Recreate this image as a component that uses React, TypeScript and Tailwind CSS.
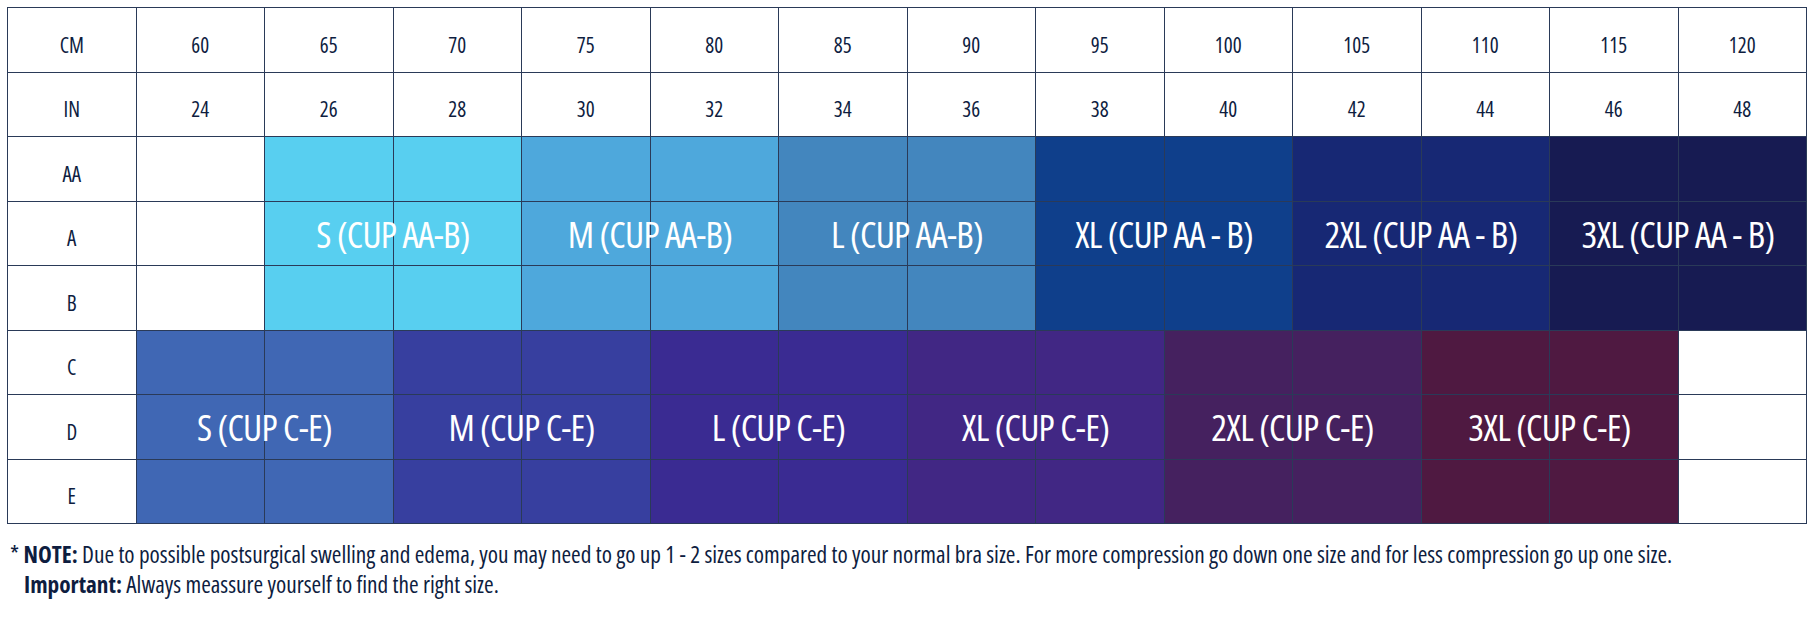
import React from 'react';

const cm = [60, 65, 70, 75, 80, 85, 90, 95, 100, 105, 110, 115, 120];
const inch = [24, 26, 28, 30, 32, 34, 36, 38, 40, 42, 44, 46, 48];

// colour per size block, by column index (1..13)
const topColors = ['', 'bg-[#58cff0]', 'bg-[#58cff0]', 'bg-[#4ea8dc]', 'bg-[#4ea8dc]', 'bg-[#4386be]', 'bg-[#4386be]', 'bg-[#0f3f8b]', 'bg-[#0f3f8b]', 'bg-[#172874]', 'bg-[#172874]', 'bg-[#171b52]', 'bg-[#171b52]'];
const bottomColors = ['bg-[#4067b4]', 'bg-[#4067b4]', 'bg-[#373f9f]', 'bg-[#373f9f]', 'bg-[#3a2b92]', 'bg-[#3a2b92]', 'bg-[#412784]', 'bg-[#412784]', 'bg-[#45215f]', 'bg-[#45215f]', 'bg-[#4f1941]', 'bg-[#4f1941]', ''];

const Cell: React.FC<{ children?: React.ReactNode; bg?: string }> = ({ children, bg }) => (
  <div className={`flex items-center justify-center pt-[11px] text-[21px] text-[#0e1d3f] ${bg || 'bg-white'}`}>{children}</div>
);

const Label: React.FC<{ children: React.ReactNode; className: string }> = ({ children, className }) => (
  <div className={`flex items-center justify-center whitespace-nowrap text-white text-[37px] tracking-[-0.02em] ${className}`}>{children}</div>
);

export default function App() {
  return (
    <div className="bg-white w-[1816px] h-[618px] p-[7px] font-['Open_Sans',sans-serif] [font-stretch:75%]">
      <div className="grid w-[1800px]">
        <div className="col-start-1 row-start-1 grid grid-cols-[repeat(14,minmax(0,1fr))] grid-rows-[repeat(8,63.5px)] gap-px bg-[#2a3a58] border border-[#2a3a58]">
          <Cell>CM</Cell>
          {cm.map((v) => <Cell key={'c' + v}>{v}</Cell>)}
          <Cell>IN</Cell>
          {inch.map((v) => <Cell key={'i' + v}>{v}</Cell>)}
          {['AA', 'A', 'B'].map((r) => (
            <React.Fragment key={r}>
              <Cell>{r}</Cell>
              {topColors.map((c, i) => <Cell key={r + i} bg={c || undefined} />)}
            </React.Fragment>
          ))}
          {['C', 'D', 'E'].map((r) => (
            <React.Fragment key={r}>
              <Cell>{r}</Cell>
              {bottomColors.map((c, i) => <Cell key={r + i} bg={c || undefined} />)}
            </React.Fragment>
          ))}
        </div>

        {/* size labels, same grid laid over the cells */}
        <div className="col-start-1 row-start-1 grid grid-cols-[repeat(14,minmax(0,1fr))] grid-rows-[repeat(8,63.5px)] gap-px border border-transparent pointer-events-none">
          <Label className="col-start-3 col-span-2 row-start-3 row-span-3">S (CUP AA-B)</Label>
          <Label className="col-start-5 col-span-2 row-start-3 row-span-3">M (CUP AA-B)</Label>
          <Label className="col-start-7 col-span-2 row-start-3 row-span-3">L (CUP AA-B)</Label>
          <Label className="col-start-9 col-span-2 row-start-3 row-span-3">XL (CUP AA - B)</Label>
          <Label className="col-start-11 col-span-2 row-start-3 row-span-3">2XL (CUP AA - B)</Label>
          <Label className="col-start-13 col-span-2 row-start-3 row-span-3">3XL (CUP AA - B)</Label>

          <Label className="col-start-2 col-span-2 row-start-6 row-span-3">S (CUP C-E)</Label>
          <Label className="col-start-4 col-span-2 row-start-6 row-span-3">M (CUP C-E)</Label>
          <Label className="col-start-6 col-span-2 row-start-6 row-span-3">L (CUP C-E)</Label>
          <Label className="col-start-8 col-span-2 row-start-6 row-span-3">XL (CUP C-E)</Label>
          <Label className="col-start-10 col-span-2 row-start-6 row-span-3">2XL (CUP C-E)</Label>
          <Label className="col-start-12 col-span-2 row-start-6 row-span-3">3XL (CUP C-E)</Label>
        </div>
      </div>

      <div className="mt-[15px] pl-[3px] text-[23.3px] leading-[30px] text-[#0e1d3f]">
        <p>* <b>NOTE:</b> Due to possible postsurgical swelling and edema, you may need to go up 1 - 2 sizes compared to your normal bra size. For more compression go down one size and for less compression go up one size.</p>
        <p className="pl-[14px]"><b>Important:</b> Always meassure yourself to find the right size.</p>
      </div>
    </div>
  );
}
